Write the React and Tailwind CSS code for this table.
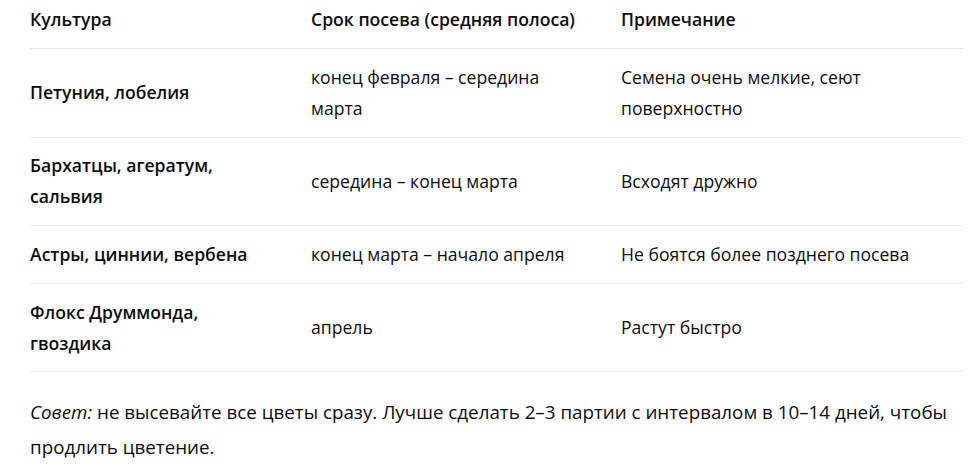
const rows = [
  {
    crop: 'Петуния, лобелия',
    term: 'конец февраля – середина марта',
    note: 'Семена очень мелкие, сеют поверхностно',
  },
  {
    crop: 'Бархатцы, агератум, сальвия',
    term: 'середина – конец марта',
    note: 'Всходят дружно',
  },
  {
    crop: 'Астры, циннии, вербена',
    term: 'конец марта – начало апреля',
    note: 'Не боятся более позднего посева',
  },
  {
    crop: 'Флокс Друммонда, гвоздика',
    term: 'апрель',
    note: 'Растут быстро',
  },
];

export default function App() {
  return (
    <div className="min-h-screen bg-white pl-[30px] pr-[10px] text-[17.6px] leading-[31px] text-[#0d0d0d] font-['Open_Sans',sans-serif]">
      {/* Table */}
      <div className="grid grid-cols-[281px_310px_343px]">
        <div className="pt-[4px] pb-[13px] pr-[48px] font-semibold border-b border-[#e5e5e5]">Культура</div>
        <div className="pt-[4px] pb-[13px] pr-[40px] font-semibold border-b border-[#e5e5e5]">Срок посева (средняя полоса)</div>
        <div className="pt-[4px] pb-[13px] pr-4 font-semibold border-b border-[#e5e5e5]">Примечание</div>

        {rows.map((r) => (
          <div key={r.crop} className="contents">
            <div className="flex items-center py-[12.8px] pr-[48px] font-semibold border-b border-[#ececec]">{r.crop}</div>
            <div className="flex items-center py-[12.8px] pr-[40px] border-b border-[#ececec]">{r.term}</div>
            <div className="flex items-center py-[12.8px] pr-4 border-b border-[#ececec]">{r.note}</div>
          </div>
        ))}
      </div>

      {/* Tip */}
      <p className="mt-[23px] text-[18.8px] leading-[35px]">
        <em>Совет:</em> не высевайте все цветы сразу. Лучше сделать 2–3 партии с интервалом в 10–14 дней, чтобы
        продлить цветение.
      </p>
    </div>
  );
}
